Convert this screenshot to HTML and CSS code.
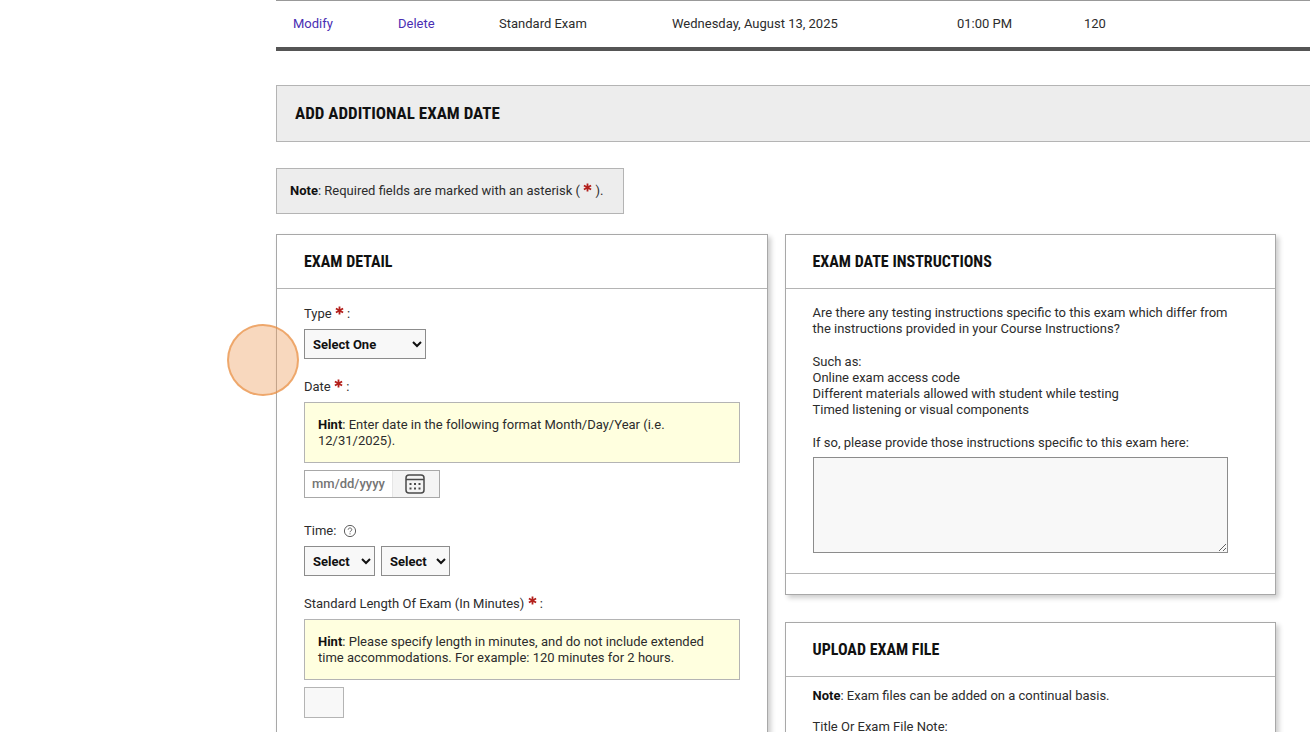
FILE: index.html
```html
<!DOCTYPE html>
<html lang="en">
<head>
<meta charset="utf-8">
<title>Add Additional Exam Date</title>
<link rel="stylesheet" href="styles.css">
</head>
<body>
<main class="page">
  <table class="exams">
    <colgroup><col class="c-modify"><col class="c-delete"><col class="c-type"><col class="c-date"><col class="c-time"><col></colgroup>
    <tbody>
      <tr><td><a href="#">Modify</a></td><td><a href="#">Delete</a></td><td>Standard Exam</td><td>Wednesday, August 13, 2025</td><td>01:00 PM</td><td>120</td></tr>
    </tbody>
  </table>

  <h1 class="banner">Add Additional Exam Date</h1>

  <p class="notice"><b>Note</b>: Required fields are marked with an asterisk ( <svg class="star" viewBox="0 0 10 10"><path d="M5 0.5v9M1 2.7l8 4.6M9 2.7L1 7.3"/></svg> ).</p>

  <div class="columns">
    <section class="panel">
      <h2 class="panel-title">Exam Detail</h2>
      <form class="fields">
        <div class="field">
          <label for="type">Type <svg class="star" viewBox="0 0 10 10"><path d="M5 0.5v9M1 2.7l8 4.6M9 2.7L1 7.3"/></svg> :</label>
          <select id="type" class="select select-wide"><option>Select One</option></select>
        </div>
        <div class="field field-date">
          <label for="date">Date <svg class="star" viewBox="0 0 10 10"><path d="M5 0.5v9M1 2.7l8 4.6M9 2.7L1 7.3"/></svg> :</label>
          <p class="hint"><b>Hint</b>: Enter date in the following format Month/Day/Year (i.e. 12/31/2025).</p>
          <div class="date-box">
            <input id="date" class="date-input" type="text" placeholder="mm/dd/yyyy">
            <button class="date-button" type="button" aria-label="Choose date">
              <svg class="calendar" viewBox="0 0 20 20"><rect x="1" y="1" width="18" height="18" rx="3"/><path d="M1 5.500h18"/><g class="dots"><rect x="4.500" y="9" width="2" height="2"/><rect x="9" y="9" width="2" height="2"/><rect x="13.500" y="9" width="2" height="2"/><rect x="4.500" y="13.500" width="2" height="2"/><rect x="9" y="13.500" width="2" height="2"/><rect x="13.500" y="13.500" width="2" height="2"/></g></svg>
            </button>
          </div>
        </div>
        <div class="field">
          <div class="time-label"><label for="hour">Time:</label>
            <svg class="help" viewBox="0 0 14 14"><circle cx="7" cy="7" r="5.600"/><path d="M5.200 5.700c0-2.300 3.600-2.300 3.600 0 0 1.200-1.800 1.200-1.800 2.500M7 9.300v1.100"/></svg>
          </div>
          <div class="time-row">
            <select id="hour" class="select select-hour"><option>Select</option></select>
            <select class="select select-minute" aria-label="Minutes"><option>Select</option></select>
          </div>
        </div>
        <div class="field">
          <label for="length">Standard Length Of Exam (In Minutes) <svg class="star" viewBox="0 0 10 10"><path d="M5 0.5v9M1 2.7l8 4.6M9 2.7L1 7.3"/></svg> :</label>
          <p class="hint"><b>Hint</b>: Please specify length in minutes, and do not include extended time accommodations. For example: 120 minutes for 2 hours.</p>
          <input id="length" class="length" type="text">
        </div>
      </form>
    </section>

    <div class="stack">
      <section class="panel">
        <h2 class="panel-title">Exam Date Instructions</h2>
        <div class="copy">
          <p>Are there any testing instructions specific to this exam which differ from the instructions provided in your Course Instructions?</p>
          <p>Such as:<br>Online exam access code<br>Different materials allowed with student while testing<br>Timed listening or visual components</p>
          <div class="field">
            <label for="instructions">If so, please provide those instructions specific to this exam here:</label>
            <textarea id="instructions" class="area"></textarea>
          </div>
        </div>
        <div class="panel-foot"></div>
      </section>
      <section class="panel">
        <h2 class="panel-title">Upload Exam File</h2>
        <div class="upload">
          <p><b>Note</b>: Exam files can be added on a continual basis.</p>
          <label for="title">Title Or Exam File Note:</label>
          <input id="title" class="length" type="text">
        </div>
      </section>
    </div>
  </div>
  <span class="pointer"></span>
</main>
</body>
</html>
```
FILE: styles.css
```css
* { box-sizing: border-box; }
html { height: 100%; overflow: hidden; }
body {
  height: 100%;
  margin: 0;
  overflow: hidden;
  background: #fff;
  color: #2c2c2c;
  font: 13px/16px Roboto, "Liberation Sans", sans-serif;
}
p, h1, h2 { margin: 0; }
b { color: #111; font-weight: 700; }
.page { position: relative; padding-left: 276px; }

.exams {
  width: 100%;
  table-layout: fixed;
  border-collapse: separate;
  border-spacing: 0;
  border-top: 1px solid #999;
  border-bottom: 4px solid #555;
}
.exams td { padding: 15px 0 15px 17px; white-space: nowrap; }
.exams a { color: #4a2eb3; text-decoration: none; }
.c-modify { width: 105px; }
.c-delete { width: 101px; }
.c-type { width: 173px; }
.c-date { width: 285px; }
.c-time { width: 127px; }

.banner {
  margin-top: 34px;
  padding: 17px 18px;
  border: 1px solid #b4b4b4;
  border-right: 0;
  background: #ededed;
  color: #111;
  font: 700 17px/21px "Roboto Condensed", Roboto, sans-serif;
  text-transform: uppercase;
}
.notice {
  width: fit-content;
  margin-top: 26px;
  padding: 14px 20px 14px 13px;
  border: 1px solid #b4b4b4;
  background: #ededed;
}
.star {
  width: 9px;
  height: 9px;
  vertical-align: 3px;
  fill: none;
  stroke: #b3201c;
  stroke-width: 2;
}

.columns {
  display: grid;
  grid-template-columns: 1fr 1fr;
  gap: 17px;
  margin-top: 20px;
  padding-right: 34px;
}
.stack { display: flex; flex-direction: column; gap: 27px; }
.panel {
  border: 1px solid #a8a8a8;
  background: #fff;
  box-shadow: 3px 3px 5px rgba(0, 0, 0, 0.2);
}
.panel-title {
  padding: 17px 27px;
  border-bottom: 1px solid #b4b4b4;
  color: #111;
  font: 700 16px/19px "Roboto Condensed", Roboto, sans-serif;
  text-transform: uppercase;
}
.fields { display: flex; flex-direction: column; gap: 20px; padding: 17px 27px 200px; }
.field { display: flex; flex-direction: column; align-items: flex-start; gap: 7px; }
.field-date { margin-bottom: 5px; }
.hint {
  width: 100%;
  padding: 14px 13px 13px;
  border: 1px solid #b4b4b4;
  background: #ffffdf;
}
.select {
  height: 30px;
  padding: 0 0 0 4px;
  border: 1px solid #8c8c8c;
  border-radius: 0;
  background: #f8f8f8;
  color: #111;
  font: 700 13px/16px Roboto, sans-serif;
}
.select-wide { width: 122px; }
.select-hour { width: 71px; }
.select-minute { width: 69px; }
.time-row { display: flex; gap: 6px; }
.time-label { display: flex; align-items: center; gap: 7px; }
.help { width: 14px; height: 14px; fill: none; stroke: #606060; stroke-width: 1; }
.date-box {
  display: flex;
  width: 136px;
  height: 28px;
  border: 1px solid #a8a8a8;
}
.date-input {
  flex: 1;
  min-width: 0;
  padding: 0 0 0 7px;
  border: 0;
  background: #fff;
  font: 500 13px/16px Roboto, sans-serif;
}
.date-input::placeholder { color: #757575; }
.date-button {
  display: flex;
  align-items: center;
  justify-content: center;
  width: 47px;
  padding: 0 2px 0 0;
  border: 0;
  border-left: 1px solid #e6e6e6;
  background: #f4f4f4;
}
.calendar { width: 20px; height: 20px; fill: none; stroke: #4a4a4a; stroke-width: 1.5; }
.dots { fill: #4a4a4a; stroke: none; }
.length { width: 40px; height: 31px; border: 1px solid #b4b4b4; background: #f8f8f8; }

.copy { display: flex; flex-direction: column; gap: 17px; padding: 16px 27px 20px; }
.copy .field { gap: 6px; }
.area {
  width: calc(100% - 20px);
  height: 96px;
  border: 1px solid #8c8c8c;
  background: #f8f8f8;
}
.panel-foot { height: 21px; border-top: 1px solid #b4b4b4; }
.upload { display: flex; flex-direction: column; gap: 15px; padding: 11px 27px 100px; }

.pointer {
  position: absolute;
  top: 324px;
  left: 227px;
  width: 72px;
  height: 72px;
  border: 2px solid rgba(232, 140, 62, 0.65);
  border-radius: 50%;
  background: rgba(238, 157, 92, 0.4);
}
```
